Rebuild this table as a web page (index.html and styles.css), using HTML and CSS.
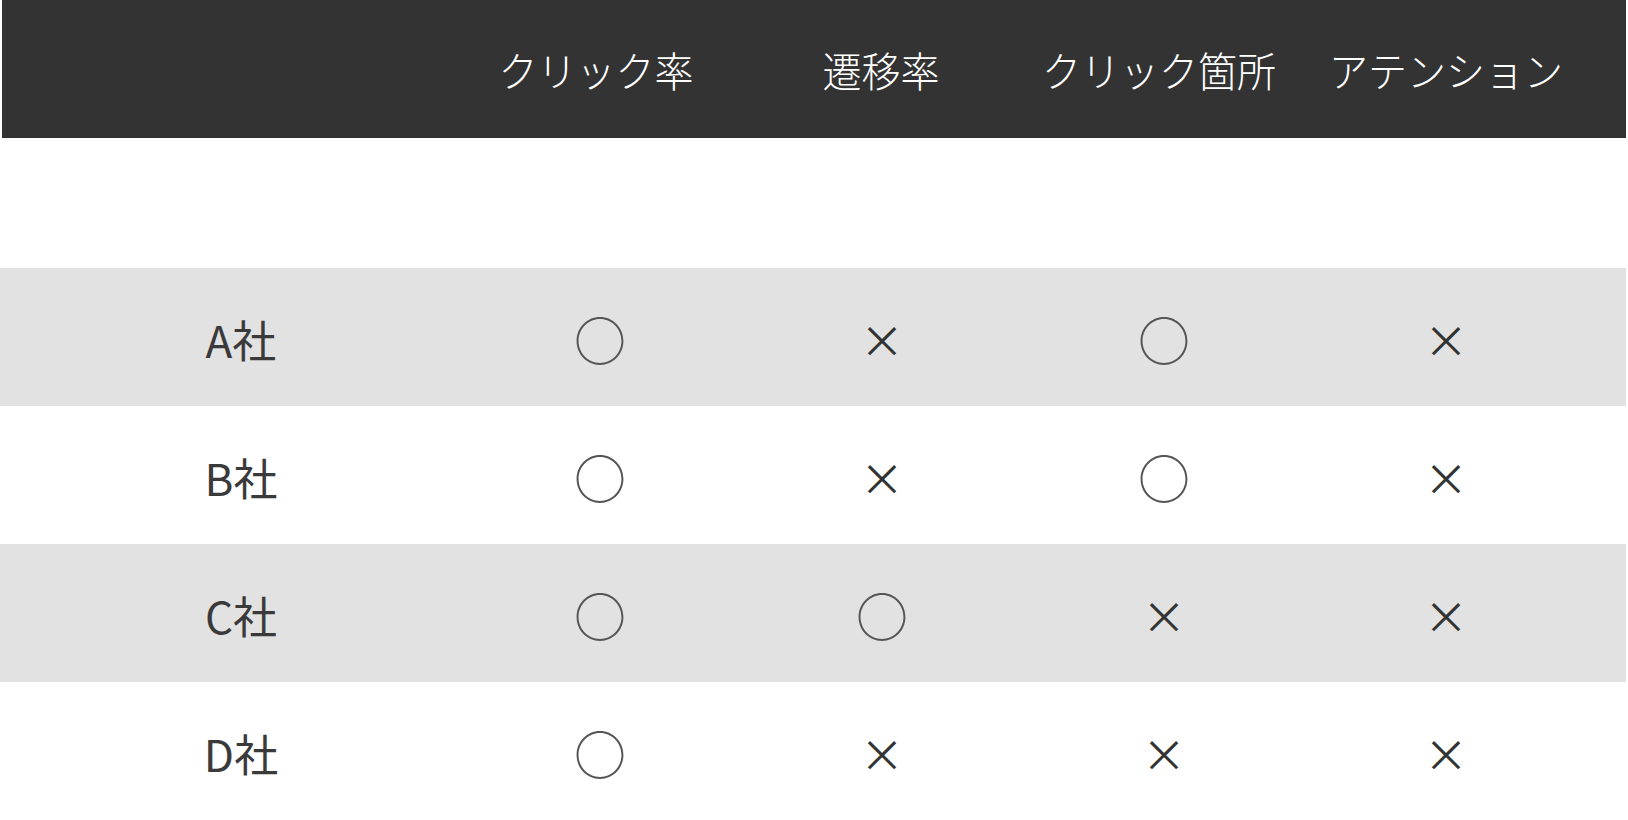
FILE: index.html
```html
<!DOCTYPE html>
<html lang="ja">
<head>
<meta charset="utf-8">
<title>比較表</title>
<link rel="stylesheet" href="styles.css">
</head>
<body>
<div class="table">
  <div class="row head">
    <div class="cell label"></div>
    <div class="cell">クリック率</div>
    <div class="cell">遷移率</div>
    <div class="cell">クリック箇所</div>
    <div class="cell">アテンション</div>
  </div>
  <div class="spacer"></div>
  <div class="row gray">
    <div class="cell label">A社</div>
    <div class="cell mark yes">○</div>
    <div class="cell mark no">×</div>
    <div class="cell mark yes">○</div>
    <div class="cell mark no">×</div>
  </div>
  <div class="row">
    <div class="cell label">B社</div>
    <div class="cell mark yes">○</div>
    <div class="cell mark no">×</div>
    <div class="cell mark yes">○</div>
    <div class="cell mark no">×</div>
  </div>
  <div class="row gray">
    <div class="cell label">C社</div>
    <div class="cell mark yes">○</div>
    <div class="cell mark yes">○</div>
    <div class="cell mark no">×</div>
    <div class="cell mark no">×</div>
  </div>
  <div class="row">
    <div class="cell label">D社</div>
    <div class="cell mark yes">○</div>
    <div class="cell mark no">×</div>
    <div class="cell mark no">×</div>
    <div class="cell mark no">×</div>
  </div>
</div>
</body>
</html>
```
FILE: styles.css
```css
html, body {
  margin: 0;
  padding: 0;
  background: #ffffff;
}
body {
  font-family: "Noto Sans CJK JP", "Noto Sans", sans-serif;
  color: #333333;
  overflow: hidden;
}
.table {
  width: 1626px;
}
.row {
  display: grid;
  grid-template-columns: 459px repeat(4, 282px);
  height: 138px;
  align-items: center;
}
.row.head {
  grid-template-columns: 455px 278px 292px 264px 310px;
  margin-left: 2px;
  background: #333333;
  color: #ffffff;
  font-size: 39px;
  font-weight: 300;
}
.row.head .cell {
  transform: scaleY(1.04);
}
.row.gray {
  background: #e2e2e2;
}
.spacer {
  height: 130px;
}
.cell {
  text-align: center;
  line-height: 1;
  white-space: nowrap;
}
.cell.label {
  padding-left: 23px;
  font-size: 44px;
  padding-top: 4px;
  color: #3a3a3a;
}
.mark {
  padding-top: 4px;
}
.mark.yes {
  font-size: 52px;
  color: #555555;
}
.mark.no {
  font-size: 44px;
  color: #333333;
}
```
